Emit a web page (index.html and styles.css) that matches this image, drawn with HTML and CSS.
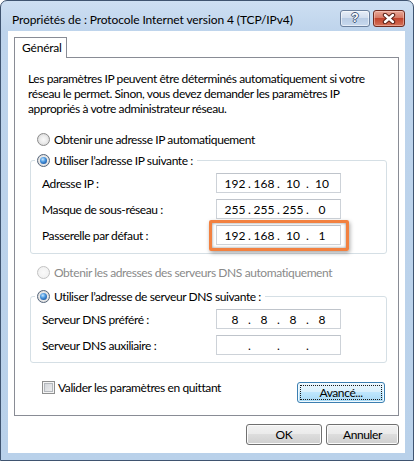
FILE: index.html
```html
<!DOCTYPE html>
<html lang="fr">
<head>
<meta charset="utf-8">
<title>Propriétés de : Protocole Internet version 4 (TCP/IPv4)</title>
<link rel="stylesheet" href="styles.css">
</head>
<body>
<div class="window">
  <div class="titlebar">
    <span class="title">Propriétés de : Protocole Internet version 4 (TCP/IPv4)</span>
    <div class="caption-btns">
      <span class="cap-btn help">?</span>
      <span class="cap-btn close">
        <svg width="14" height="11" viewBox="0 0 14 11" aria-hidden="true">
          <path d="M3 2 L11 9 M11 2 L3 9" stroke="#5a2016" stroke-width="4.4" stroke-linecap="round"/>
          <path d="M3 2 L11 9 M11 2 L3 9" stroke="#ffffff" stroke-width="2.4" stroke-linecap="round"/>
        </svg>
      </span>
    </div>
  </div>
  <div class="client">
    <div class="tabs"><span class="tab">Général</span></div>
    <div class="panel">
      <p class="intro">Les paramètres IP peuvent être déterminés automatiquement si votre<br>réseau le permet. Sinon, vous devez demander les paramètres IP<br>appropriés à votre administrateur réseau.</p>

      <div class="option opt-ip-auto"><span class="radio"></span><span>Obtenir une adresse IP automatiquement</span></div>

      <fieldset class="group group-ip">
        <legend class="option legend"><span class="radio checked"></span><span>Utiliser l’adresse IP suivante :</span></legend>
        <div class="row">
          <span class="lbl">Adresse IP :</span>
          <span class="ip"><span class="f">192</span><span class="d">.</span><span class="f">168</span><span class="d">.</span><span class="f">10</span><span class="d">.</span><span class="f">10</span></span>
        </div>
        <div class="row">
          <span class="lbl">Masque de sous-réseau :</span>
          <span class="ip"><span class="f">255</span><span class="d">.</span><span class="f">255</span><span class="d">.</span><span class="f">255</span><span class="d">.</span><span class="f">0</span></span>
        </div>
        <div class="row">
          <span class="lbl">Passerelle par défaut :</span>
          <span class="ip highlight"><span class="f">192</span><span class="d">.</span><span class="f">168</span><span class="d">.</span><span class="f">10</span><span class="d">.</span><span class="f">1</span></span>
        </div>
      </fieldset>

      <div class="option opt-dns-auto disabled"><span class="radio disabled"></span><span>Obtenir les adresses des serveurs DNS automatiquement</span></div>

      <fieldset class="group group-dns">
        <legend class="option legend"><span class="radio checked"></span><span>Utiliser l’adresse de serveur DNS suivante :</span></legend>
        <div class="row">
          <span class="lbl">Serveur DNS préféré :</span>
          <span class="ip"><span class="f">8</span><span class="d">.</span><span class="f">8</span><span class="d">.</span><span class="f">8</span><span class="d">.</span><span class="f">8</span></span>
        </div>
        <div class="row">
          <span class="lbl">Serveur DNS auxiliaire :</span>
          <span class="ip"><span class="f"></span><span class="d">.</span><span class="f"></span><span class="d">.</span><span class="f"></span><span class="d">.</span><span class="f"></span></span>
        </div>
      </fieldset>

      <div class="bottom-row">
        <div class="check-opt"><span class="checkbox"></span><span>Valider les paramètres en quittant</span></div>
        <span class="btn btn-default advanced"><span class="focus-ring">Avancé...</span></span>
      </div>
    </div>
    <div class="footer">
      <span class="btn ok">OK</span>
      <span class="btn cancel">Annuler</span>
    </div>
  </div>
</div>
</body>
</html>
```

FILE: styles.css
```css
* { box-sizing: border-box; }

html, body {
  margin: 0;
  padding: 0;
}

body {
  width: 414px;
  height: 461px;
  overflow: hidden;
  background: #ffffff;
  font-family: Lato, "Noto Sans", sans-serif;
  font-size: 12px;
  color: #000;
}

.window {
  width: 414px;
  height: 461px;
  border: 1px solid #3f5470;
  border-radius: 7px 7px 0 0;
  background: linear-gradient(#cddff2, #bed4ec 30px, #b9d1ea);
  display: flex;
  flex-direction: column;
}

.titlebar {
  height: 30px;
  flex: none;
  display: flex;
  align-items: flex-start;
  padding: 0 8px 0 11px;
}

.title {
  flex: 1;
  margin-top: 11px;
  line-height: 16px;
  white-space: nowrap;
  letter-spacing: -0.1px;
}

.caption-btns {
  display: flex;
  gap: 3px;
  margin-top: 9px;
}

.cap-btn {
  height: 17px;
  border-radius: 3px;
  display: flex;
  align-items: center;
  justify-content: center;
}

.help {
  width: 30px;
  border: 1px solid #6a7f9c;
  background: linear-gradient(#e6eef8, #d2deee 45%, #b9cce4 50%, #c8d9ee);
  box-shadow: inset 0 0 0 1px rgba(255, 255, 255, 0.55);
  color: #ffffff;
  font-family: "Liberation Sans", sans-serif;
  font-weight: bold;
  font-size: 12px;
  line-height: 15px;
  text-shadow: 1px 0 0 #44597a, -1px 0 0 #44597a, 0 1px 0 #44597a, 0 -1px 0 #44597a;
}

.close {
  width: 32px;
  border: 1px solid #6e2b20;
  background: linear-gradient(#e9a898, #d67a66 45%, #c2442d 50%, #d4735a);
  box-shadow: inset 0 0 0 1px rgba(255, 220, 210, 0.45);
}

.client {
  flex: 1;
  margin: 0 8px 7px 7px;
  background: #ffffff;
  padding: 6px 6px 0;
  display: flex;
  flex-direction: column;
  letter-spacing: -0.4px;
}

.tabs {
  display: flex;
  height: 20px;
  flex: none;
}

.tab {
  position: relative;
  z-index: 1;
  width: 53px;
  height: 21px;
  border: 1px solid #898c95;
  border-bottom: none;
  background: #ffffff;
  padding-left: 7px;
  line-height: 19px;
  letter-spacing: -0.2px;
}

.panel {
  width: 385px;
  height: 359px;
  flex: none;
  border: 1px solid #898c95;
  padding: 13px 11px 0 13px;
}

.intro {
  margin: 0;
  line-height: 15px;
  white-space: nowrap;
}

.option {
  display: flex;
  align-items: center;
  gap: 4px;
  height: 16px;
  padding-left: 9px;
  white-space: nowrap;
}

.opt-ip-auto { margin-top: 15px; }
.opt-dns-auto { margin-top: 10px; }

.disabled { color: #8a8a8a; }

.radio {
  position: relative;
  flex: none;
  width: 13px;
  height: 13px;
  border-radius: 50%;
  border: 1px solid #8b8b8b;
  background: radial-gradient(circle at 50% 50%, #f9f9f9 0, #ececec 45%, #cfcfcf 100%);
}

.radio.checked {
  border-color: #54647a;
}

.radio.checked::after {
  content: "";
  position: absolute;
  inset: 2px;
  border-radius: 50%;
  background: radial-gradient(circle at 40% 35%, #c7e6ff 0, #4b98df 40%, #164f9c 85%);
}

.radio.disabled {
  border-color: #c2c2c2;
  background: radial-gradient(circle, #fafafa 0, #eeeeee 100%);
}

.group {
  margin: 5px 0 0 2px;
  width: 357px;
  min-width: 0;
  border: 1px solid #d5dfe5;
  border-radius: 3px;
  padding: 5px 0 8px 4px;
}

.group-ip { margin-top: 5px; }
.group-dns { margin-top: 8px; padding-bottom: 7px; }

.legend {
  padding: 0 4px 0 2px;
}

.row {
  display: flex;
  align-items: center;
  height: 20px;
  padding-left: 7px;
}

.row + .row { margin-top: 6px; }

.lbl {
  width: 174px;
  flex: none;
}

.ip {
  position: relative;
  width: 125px;
  height: 20px;
  border: 1px solid #cdd2d8;
  border-top-color: #bfc4cb;
  display: flex;
  align-items: center;
  padding-left: 6px;
  background: #fff;
  letter-spacing: 0;
}

.ip .f {
  width: 24px;
  text-align: center;
}

.ip .d {
  width: 5px;
  text-align: center;
}

.ip.highlight::after {
  content: "";
  position: absolute;
  top: -6px;
  left: -8px;
  right: -9px;
  bottom: -7px;
  border: 3px solid #f28140;
  border-radius: 2px;
  box-shadow: inset 0 0 3px rgba(0, 0, 0, 0.45), 1px 2px 4px rgba(0, 0, 0, 0.35);
}

.bottom-row {
  display: flex;
  align-items: flex-start;
  margin-top: 19px;
  padding-left: 14px;
}

.check-opt {
  display: flex;
  align-items: center;
  gap: 3px;
  height: 13px;
  margin-top: -1px;
  white-space: nowrap;
}

.checkbox {
  flex: none;
  width: 13px;
  height: 13px;
  border: 1px solid #8e8f8f;
  background: linear-gradient(135deg, #cdd1d6, #f3f3f3);
  box-shadow: inset 0 0 0 1px #f4f4f4, inset 0 0 0 2px #b4b8bd;
}

.btn {
  display: flex;
  align-items: center;
  justify-content: center;
  height: 21px;
  border: 1px solid #707070;
  border-radius: 3px;
  background: linear-gradient(#f2f2f2, #ebebeb 45%, #dddddd 50%, #cfcfcf);
  box-shadow: inset 0 0 0 1px #fbfbfb;
}

.advanced {
  margin-left: auto;
  margin-right: 2px;
  width: 88px;
  padding: 2px;
  border-color: #3c7fb1;
  background: linear-gradient(#eaf6fd, #d9f0fc 45%, #bee6fd 50%, #a7d9f5);
  box-shadow: inset 0 0 0 1px #f0f9fe;
}

.focus-ring {
  flex: 1;
  align-self: stretch;
  display: flex;
  align-items: center;
  justify-content: center;
  border: 1px dotted #1a1a1a;
}

.footer {
  display: flex;
  justify-content: flex-end;
  gap: 4px;
  margin-top: 8px;
}

.ok { width: 76px; }
.cancel { width: 73px; }
```
